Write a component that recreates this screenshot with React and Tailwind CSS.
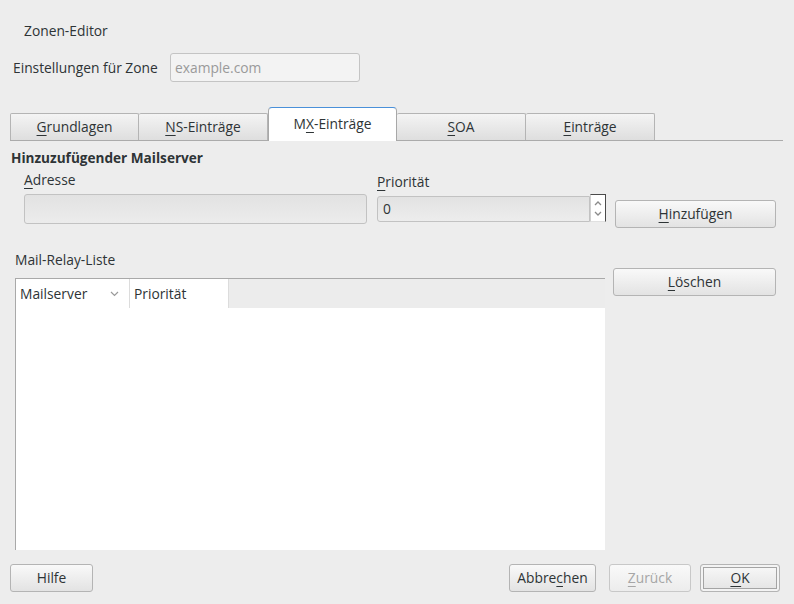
const tabs = [
  { key: 'g', pre: '', mn: 'G', post: 'rundlagen' },
  { key: 'ns', pre: '', mn: 'N', post: 'S-Einträge' },
  { key: 'mx', pre: 'M', mn: 'X', post: '-Einträge', active: true },
  { key: 'soa', pre: '', mn: 'S', post: 'OA' },
  { key: 'e', pre: '', mn: 'E', post: 'inträge' },
];

function Mn({ children }) {
  return <u className="underline decoration-1 underline-offset-[3px]">{children}</u>;
}

function Button({ className = '', disabled, focused, children }) {
  return (
    <button
      type="button"
      className={`h-[28px] rounded-[3px] border border-[#b4b4b4] bg-gradient-to-b from-[#f9f9f9] to-[#e3e3e3] text-[13.8px] ${disabled ? 'text-[#a6a6a6] from-[#f2f2f2] to-[#ececec] border-[#c8c8c8]' : 'text-[#2e3436]'} ${focused ? 'border-[#8f8f8f] shadow-[inset_0_0_0_2px_#f3f3f3,inset_0_0_0_3px_#a4a4a4]' : ''} ${className}`}
    >
      {children}
    </button>
  );
}

function Chevron({ up }) {
  return (
    <svg width="8" height="6" viewBox="0 0 8 6" className="block">
      <path d={up ? 'M1 5 L4 2 L7 5' : 'M1 1 L4 4 L7 1'} fill="none" stroke="#8a8a8a" strokeWidth="1.3" />
    </svg>
  );
}

export default function App() {
  return (
    <div className="w-[794px] h-[604px] bg-[#ededed] text-[13.8px] leading-[18px] text-[#2e3436] flex flex-col overflow-hidden" style={{ fontFamily: '"Open Sans", "DejaVu Sans", sans-serif' }}>
      <div className="pl-[24px] pt-[22px]">Zonen-Editor</div>

      <div className="flex items-center pl-[13px] mt-[13px]">
        <span className="w-[157px]">Einstellungen für Zone</span>
        <div className="w-[190px] h-[29px] rounded-[3px] border border-[#c4c4c4] bg-[#f3f3f3] flex items-center px-[4px] text-[#9a9a9a]">example.com</div>
      </div>

      <div className="flex items-end h-[34px] ml-[10px] w-[773px] mt-[25px] border-b border-[#ababab]">
        {tabs.map((t) =>
          t.active ? (
            <div key={t.key} className="relative -mb-px w-[129px] h-[34px] bg-white border border-[#a8a8a8] border-t-[#4a90d9] border-b-0 rounded-t-[4px] flex items-center justify-center pb-[1px]">
              {t.pre}<Mn>{t.mn}</Mn>{t.post}
            </div>
          ) : (
            <div key={t.key} className="w-[129px] h-[27px] bg-gradient-to-b from-[#f4f4f4] to-[#dedede] border border-[#b4b4b4] border-b-0 border-l-0 first:border-l rounded-t-[2px] flex items-center justify-center">
              {t.pre}<Mn>{t.mn}</Mn>{t.post}
            </div>
          )
        )}
      </div>

      <div className="pl-[11px] mt-[8px] font-bold text-[13.6px]">Hinzuzufügender Mailserver</div>

      <div className="flex items-start">
        <div className="ml-[24px] w-[343px]">
          <div className="mt-[4px]"><Mn>A</Mn>dresse</div>
          <div className="mt-[5px] h-[30px] rounded-[3px] border border-[#c2c2c2] bg-gradient-to-b from-[#e2e2e2] to-[#ececec]" />
        </div>
        <div className="ml-[10px] w-[229px]">
          <div className="mt-[6px]"><Mn>P</Mn>riorität</div>
          <div className="mt-[3px] flex items-start">
            <div className="mt-[2px] w-[213px] h-[26px] rounded-l-[3px] border border-[#c2c2c2] bg-gradient-to-b from-[#e2e2e2] to-[#ededed] flex items-center px-[5px]">0</div>
            <div className="w-[16px] h-[28px] bg-white border-t border-r border-[#4a4a4a] border-l border-l-[#d0d0d0] border-b border-b-[#e0e0e0] flex flex-col items-center justify-around py-[2px]">
              <Chevron up />
              <Chevron />
            </div>
          </div>
        </div>
        <Button className="ml-[9px] mt-[33px] w-[161px]"><Mn>H</Mn>inzufügen</Button>
      </div>

      <div className="flex items-start">
        <div className="ml-[15px] w-[590px]">
          <div className="mt-[23px]">Mail-Relay-Liste</div>
          <div className="mt-[9px] h-[272px] border-t border-l border-[#a9a9a9] bg-white flex flex-col">
            <div className="h-[29px] bg-[#ececec] flex">
              <div className="w-[114px] bg-white border-r border-[#dcdcdc] flex items-center justify-between pl-[4px] pr-[10px]">
                <span>Mailserver</span>
                <svg width="9" height="6" viewBox="0 0 9 6"><path d="M1 1 L4.5 4.5 L8 1" fill="none" stroke="#9a9a9a" strokeWidth="1.2" /></svg>
              </div>
              <div className="w-[99px] bg-white border-r border-[#dcdcdc] flex items-center pl-[4px]">Priorität</div>
            </div>
            <div className="flex-1 bg-white" />
          </div>
        </div>
        <Button className="ml-[8px] mt-[40px] w-[163px]"><Mn>L</Mn>öschen</Button>
      </div>

      <div className="flex items-center mt-[14px] pl-[10px] pr-[14px]">
        <Button className="w-[83px]">Hilfe</Button>
        <div className="flex-1" />
        <Button className="w-[87px]">Abbre<Mn>c</Mn>hen</Button>
        <Button disabled className="ml-[13px] w-[82px]"><Mn>Z</Mn>urück</Button>
        <Button focused className="ml-[9px] w-[80px]"><Mn>O</Mn>K</Button>
      </div>
    </div>
  );
}
